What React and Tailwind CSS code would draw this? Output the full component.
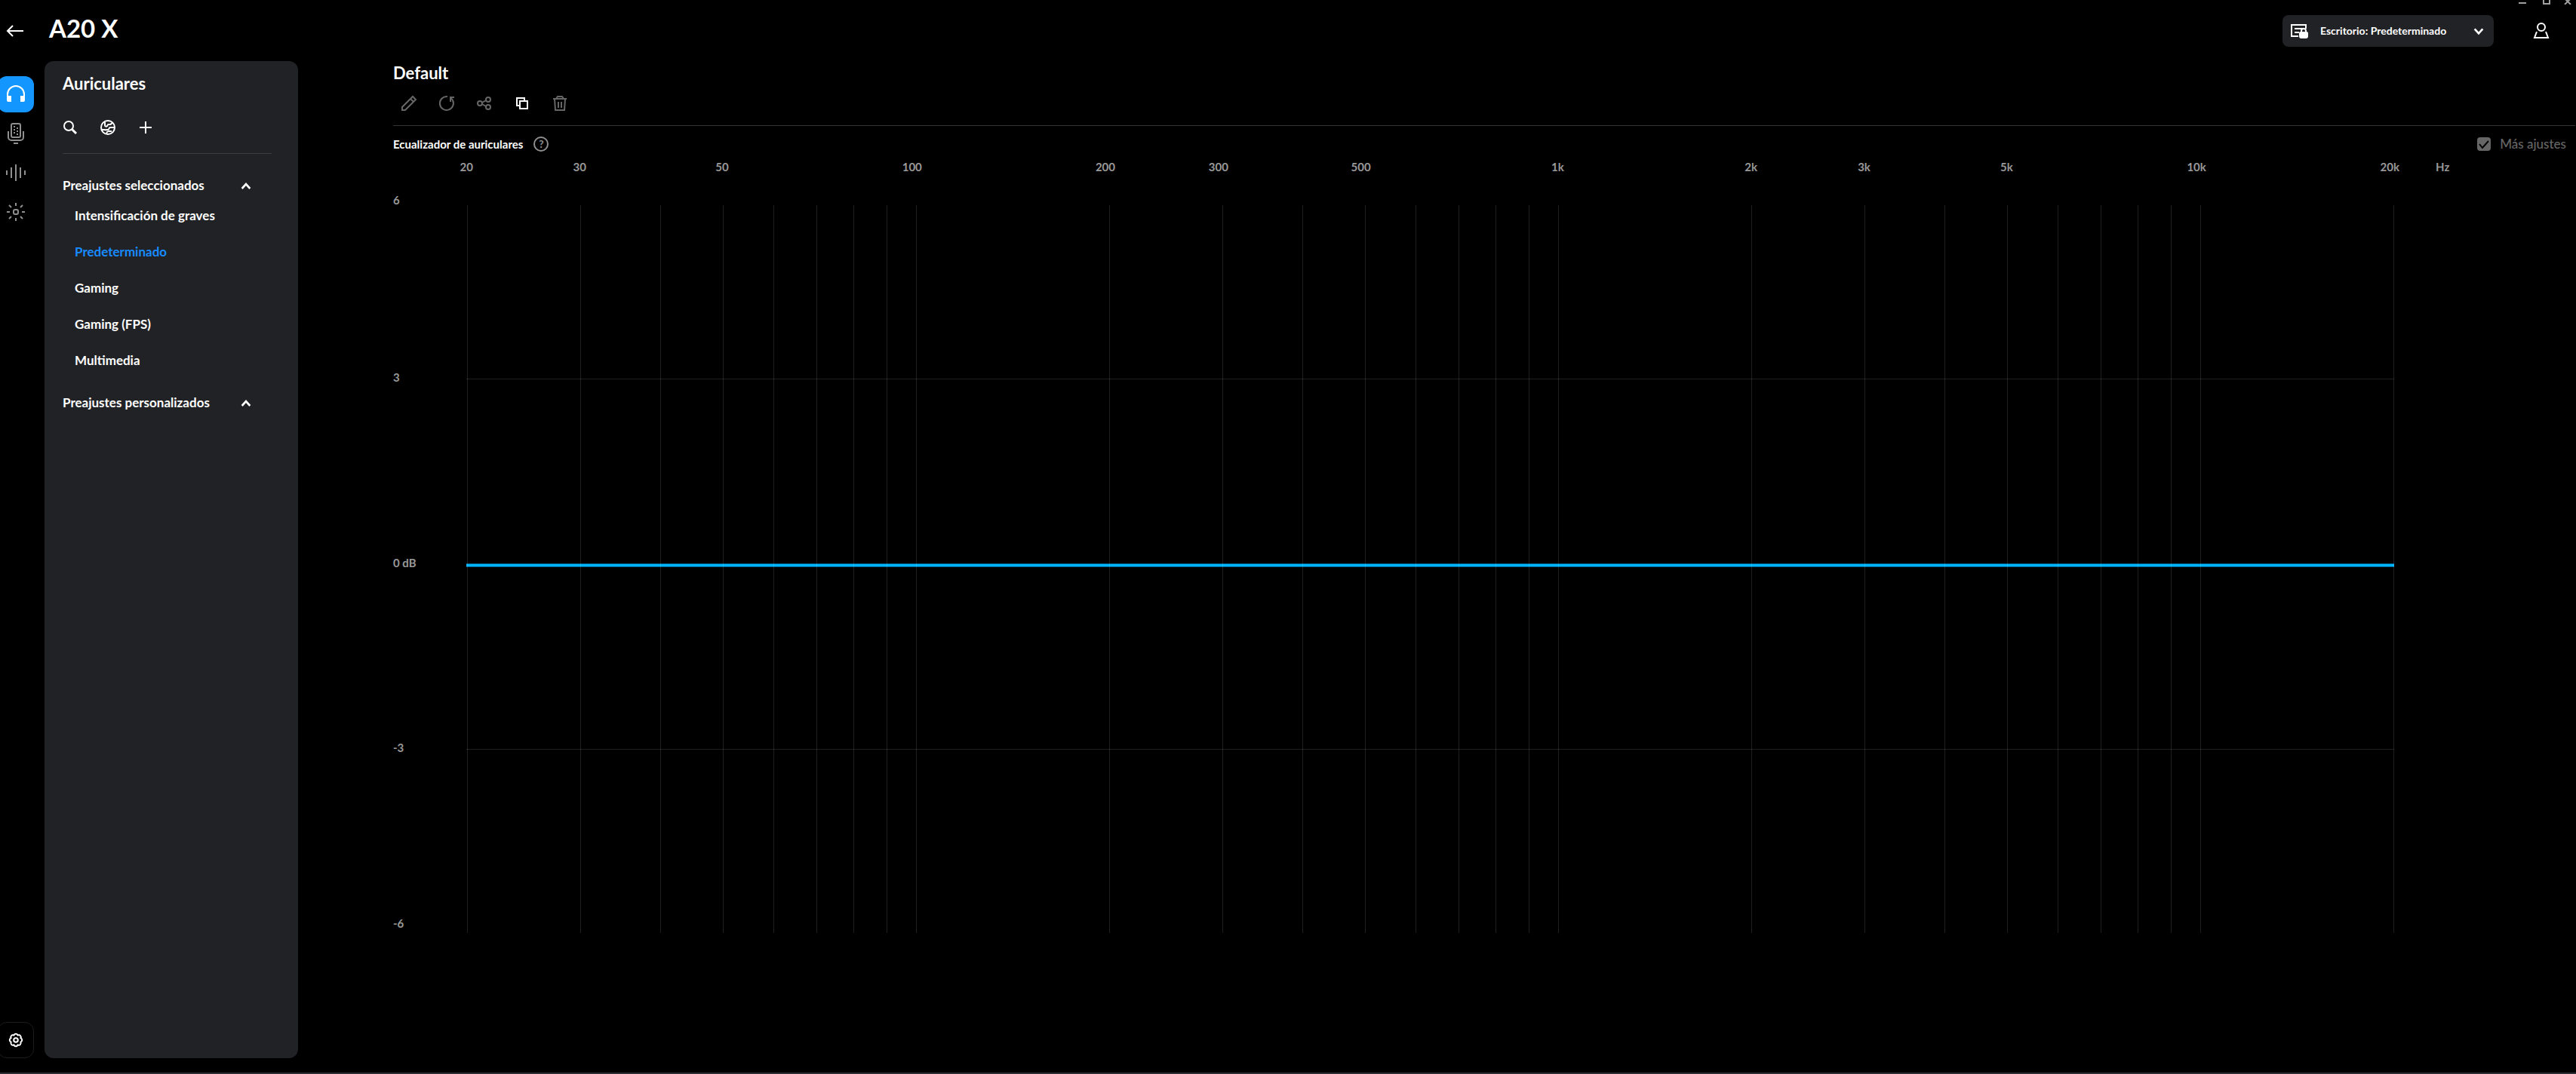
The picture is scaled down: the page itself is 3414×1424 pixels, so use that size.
import { useState } from 'react';

const rail = [
    { id: 'headphones', label: 'Auriculares' },
    { id: 'mic', label: 'Micrófono' },
    { id: 'mixer', label: 'Mezclador' },
    { id: 'light', label: 'Iluminación' },
];

const panelTools = [
    { id: 'search', label: 'Buscar' },
    { id: 'globe', label: 'Explorar' },
    { id: 'plus', label: 'Nuevo preajuste' },
];

const presets = ['Intensificación de graves', 'Predeterminado', 'Gaming', 'Gaming (FPS)', 'Multimedia'];

const actions = [
    { id: 'edit', label: 'Editar' },
    { id: 'reset', label: 'Restablecer' },
    { id: 'share', label: 'Compartir' },
    { id: 'copy', label: 'Duplicar', enabled: true },
    { id: 'trash', label: 'Eliminar' },
];

const freqLabels = [
    [20, '20'], [30, '30'], [50, '50'], [100, '100'], [200, '200'], [300, '300'], [500, '500'],
    [1000, '1k'], [2000, '2k'], [3000, '3k'], [5000, '5k'], [10000, '10k'], [20000, '20k'],
];

const gridFreqs = [
    20, 30, 40, 50, 60, 70, 80, 90, 100, 200, 300, 400, 500, 600, 700, 800, 900, 1000,
    2000, 3000, 4000, 5000, 6000, 7000, 8000, 9000, 10000, 20000,
];

const gainLabels = ['6', '3', '0 dB', '-3', '-6'];

// log scale, 20 Hz - 20 kHz
const freqPos = (f) => (Math.log10(f / 20) / 3) * 100;

function Icon({ name, size = 24 }) {
    const props = { width: size, height: size, viewBox: '0 0 24 24', fill: 'none', stroke: 'currentColor', strokeWidth: 2, 'aria-hidden': true };
    switch (name) {
        case 'back':
            return <svg {...props}><path d="M23 12H3M9 5l-7 7 7 7" /></svg>;
        case 'headphones':
            return (
                <svg {...props}>
                    <path d="M1 16v-4a11 11 0 0 1 22 0v4" />
                    <path d="M0 14h6v8H2a2 2 0 0 1-2-2zM18 14h6v6a2 2 0 0 1-2 2h-4z" fill="currentColor" stroke="none" />
                </svg>
            );
        case 'mic':
            return (
                <svg {...props} height="28" viewBox="0 0 24 28">
                    <rect x="6" y="1" width="12" height="18" rx="2" />
                    <path d="M2 11v8a4 4 0 0 0 4 4h12a4 4 0 0 0 4-4v-8M9 27h6" />
                    <path d="M9 5h2M13 7h2M9 9h2M13 11h2M9 13h2M13 15h2" />
                </svg>
            );
        case 'mixer':
            return <svg {...props} width="26" viewBox="0 0 26 24"><path d="M1 9v6M7 5v14M13 1v22M19 5v14M25 9v6" /></svg>;
        case 'light':
            return (
                <svg {...props}>
                    <rect x="9" y="9" width="6" height="6" rx="2" />
                    <path d="M12 0v4M12 20v4M0 12h4M20 12h4M3 3l3 3M18 18l3 3M3 21l3-3M18 6l3-3" />
                </svg>
            );
        case 'search':
            return <svg {...props}><circle cx="10" cy="10" r="6" /><path d="M14 14l6 6" strokeWidth="3" /></svg>;
        case 'globe':
            return (
                <svg {...props}>
                    <circle cx="12" cy="12" r="9" />
                    <path d="M8 5v4c0 2 2 2 3 1s0-2 2-2h2c2 0 1-2 3-2M4 15h3c2 0 2 1 3 0h2c2 0 1-3 3-3h5M10 20c1-1 0-3 3-3h4" />
                </svg>
            );
        case 'plus':
            return <svg {...props}><path d="M12 4v16M4 12h16" /></svg>;
        case 'up':
            return <svg {...props}><path d="M4 18l8-9 8 9" strokeWidth="4" /></svg>;
        case 'down':
            return <svg {...props}><path d="M4 8l8 9 8-9" strokeWidth="4" /></svg>;
        case 'edit':
            return <svg {...props}><path d="M3 17L17 3l4 4L7 21H3zM14 6l4 4" /></svg>;
        case 'reset':
            return <svg {...props}><path d="M13 3a9 9 0 1 0 7 5M17 10V4h5M17 4l3 4" /></svg>;
        case 'share':
            return (
                <svg {...props}>
                    <circle cx="6" cy="12" r="3" />
                    <circle cx="17" cy="7" r="3" />
                    <circle cx="17" cy="17" r="3" />
                    <path d="M9 11l5-3M9 13l5 3" />
                </svg>
            );
        case 'copy':
            return <svg {...props}><path d="M9 9h10v10H9zM9 15H5V5h10v4" /></svg>;
        case 'trash':
            return <svg {...props}><path d="M3 6h18M7 6l2-3h6l2 3M5 6l1 15h12l1-15M10 10v8M14 10v8" /></svg>;
        case 'profile':
            return (
                <svg {...props}>
                    <path d="M21 9V4H2v15h9M6 9h11M6 14h6" />
                    <path d="M15 14v-2a3 3 0 0 1 6 0v2" />
                    <path d="M12 15a2 2 0 0 1 2-2h8a2 2 0 0 1 2 2v4a3 3 0 0 1-3 3h-6a3 3 0 0 1-3-3z" fill="currentColor" stroke="none" />
                </svg>
            );
        case 'user':
            return <svg {...props}><circle cx="12" cy="7" r="5" /><path d="M6 13l-3 8h18l-3-8" /></svg>;
        case 'gear':
            return (
                <svg {...props}>
                    <circle cx="12" cy="12" r="2.800" />
                    <path
                        d="M18.300 9.400A2.700 2.700 0 0 1 18.300 14.600A2.700 2.700 0 0 1 14.600 18.300A2.700 2.700 0 0 1 9.400 18.300A2.700 2.700 0 0 1 5.700 14.600A2.700 2.700 0 0 1 5.700 9.400A2.700 2.700 0 0 1 9.400 5.700A2.700 2.700 0 0 1 14.600 5.700A2.700 2.700 0 0 1 18.300 9.400z"
                        strokeLinejoin="round"
                    />
                </svg>
            );
        default:
            return null;
    }
}

function WindowControls() {
    return (
        <div className="absolute top-0 right-0 flex text-[#a0a0a0]">
            <button aria-label="Minimizar" className="w-8 h-2 flex justify-center">
                <svg width="10" height="6" fill="none" stroke="currentColor" strokeWidth="2"><path d="M0 4h10" /></svg>
            </button>
            <button aria-label="Maximizar" className="w-8 h-2 flex justify-center">
                <svg width="10" height="6" fill="none" stroke="currentColor" strokeWidth="2"><path d="M1 0v5h8V0" /></svg>
            </button>
            <button aria-label="Cerrar" className="w-[23px] h-2 flex justify-center">
                <svg width="10" height="6" fill="none" stroke="currentColor" strokeWidth="2"><path d="M1 6l8-8M9 6L1-2" /></svg>
            </button>
        </div>
    );
}

function PresetGroup({ title, items, selected, onSelect }) {
    const [open, setOpen] = useState(true);

    return (
        <section>
            <button
                onClick={() => setOpen(!open)}
                aria-expanded={open}
                className="w-full h-8 pr-[26px] flex items-center justify-between text-[17px] leading-6 font-bold"
            >
                {title}
                <Icon name={open ? 'up' : 'down'} size={16} />
            </button>
            {open && (
                <ul>
                    {items.map(item => (
                        <li key={item}>
                            <button
                                onClick={() => onSelect(item)}
                                className={`w-full h-12 pl-4 text-left text-[17px] leading-6 font-bold ${selected === item ? 'text-[#178bff]' : 'text-white'}`}
                            >
                                {item}
                            </button>
                        </li>
                    ))}
                </ul>
            )}
        </section>
    );
}

function Equalizer() {
    return (
        <div className="flex-1 flex flex-col text-[#999999] text-[15px] leading-5 font-bold">
            {/* Frequency axis, labels end just after their grid line */}
            <div className="flex h-5">
                <div className="relative flex-1 ml-[106px]">
                    {freqLabels.map(([f, label]) => (
                        <span key={f} className="absolute top-0" style={{ right: `${100 - freqPos(f)}%` }}>{label}</span>
                    ))}
                </div>
                <span className="w-[233px] pl-12">Hz</span>
            </div>

            <div className="flex-1 flex mt-6 pr-[240px]">
                <div className="w-[97px] pb-[3px] grid grid-rows-[235fr_246fr_245fr_233fr_20px]">
                    {gainLabels.map(g => <span key={g}>{g}</span>)}
                </div>
                <div className="flex-1 flex pt-[17px]">
                    <div className="relative flex-1">
                        <div className="absolute inset-x-0 top-[49.2%] h-[5px] bg-[#00b4ff] border-y border-[#00608a]" />
                        <div className="absolute inset-x-0 top-[23.8%] h-px bg-white/12" />
                        <div className="absolute inset-x-0 top-[74.7%] h-px bg-white/12" />
                        <div className="absolute inset-y-0 left-px right-px">
                            {gridFreqs.map(f => (
                                <div key={f} className="absolute inset-y-0 w-px bg-white/12" style={{ left: `${freqPos(f)}%` }} />
                            ))}
                        </div>
                    </div>
                </div>
            </div>
        </div>
    );
}

export default function App() {
    const [selected, setSelected] = useState('Predeterminado');
    const [tab, setTab] = useState('headphones');

    return (
        <div className="relative min-h-screen flex flex-col bg-black text-white font-['Lato',sans-serif] border-b-2 border-[#2b2e33]">
            <WindowControls />

            {/* Top bar */}
            <header className="h-[81px] flex items-start">
                <button aria-label="Volver" className="w-[65px] pt-[29px] pl-2">
                    <Icon name="back" />
                </button>
                <h1 className="pt-[17px] text-[33px] leading-10 font-bold">A20 X</h1>
                <label className="ml-auto mt-5 mr-[51px] w-[280px] h-[42px] flex items-center pl-[10px] pr-3 rounded-lg bg-[#212226]">
                    <Icon name="profile" />
                    <select
                        aria-label="Perfil"
                        className="flex-1 ml-4 appearance-none bg-transparent text-[14px] leading-5 font-bold outline-none"
                    >
                        <option>Escritorio: Predeterminado</option>
                    </select>
                    <Icon name="down" size={16} />
                </label>
                <button aria-label="Cuenta" className="mt-[29px] mr-[34px]">
                    <Icon name="user" />
                </button>
            </header>

            <div className="flex-1 flex pb-[19px]">
                {/* Icon rail */}
                <nav className="w-[59px] pt-5 flex flex-col gap-1">
                    {rail.map(item => (
                        <button
                            key={item.id}
                            aria-label={item.label}
                            onClick={() => setTab(item.id)}
                            className={`w-12 h-12 -ml-[3px] rounded-xl flex items-center justify-center ${tab === item.id ? 'bg-[#1496ff] text-white' : 'text-[#8f8f8f]'}`}
                        >
                            <Icon name={item.id} />
                        </button>
                    ))}
                    <button aria-label="Configuración" className="w-12 h-12 -ml-[3px] mt-auto rounded-xl border border-[#1c1c1e] flex items-center justify-center">
                        <Icon name="gear" />
                    </button>
                </nav>

                {/* Presets panel */}
                <aside className="w-[336px] shrink-0 rounded-xl bg-[#212226] pt-4 pl-6 pr-[35px]">
                    <h2 className="text-[22px] leading-7 font-bold">Auriculares</h2>
                    <div className="mt-8 pb-[22px] border-b border-[#3b3c40]">
                        <div className="-mx-[2px] flex gap-[26px]">
                            {panelTools.map(t => (
                                <button key={t.id} aria-label={t.label} className="w-6 h-6">
                                    <Icon name={t.id} />
                                </button>
                            ))}
                        </div>
                    </div>
                    <div className="mt-[26px] flex flex-col gap-4">
                        <PresetGroup title="Preajustes seleccionados" items={presets} selected={selected} onSelect={setSelected} />
                        <PresetGroup title="Preajustes personalizados" items={[]} selected={selected} onSelect={setSelected} />
                    </div>
                </aside>

                {/* Preset detail */}
                <main className="flex-1 flex flex-col pl-[126px] pr-px pb-[166px]">
                    <h2 className="text-[22px] leading-8 font-bold">Default</h2>
                    <div className="mt-3 pb-[17px] pl-[9px] flex gap-[26px] border-b border-[#333333]">
                        {actions.map(a => (
                            <button key={a.id} aria-label={a.label} disabled={!a.enabled} className="w-6 h-6 disabled:text-[#666666]">
                                <Icon name={a.id} />
                            </button>
                        ))}
                    </div>
                    <div className="h-11 pt-1 pr-3 flex items-center">
                        <h3 className="text-[15px] leading-5 font-bold">Ecualizador de auriculares</h3>
                        <button aria-label="Ayuda" className="ml-[14px] w-5 h-5 rounded-full border-2 border-[#8f8f8f] text-[#8f8f8f] text-[14px] leading-4 font-bold">
                            ?
                        </button>
                        <label className="ml-auto flex items-center gap-3 text-[17px] leading-5 font-medium text-[#666666]">
                            <span className="relative w-[18px] h-[18px]">
                                <input type="checkbox" defaultChecked disabled className="block w-[18px] h-[18px] appearance-none rounded bg-[#666666]" />
                                <svg width="18" height="18" viewBox="0 0 18 18" fill="none" stroke="#000000" strokeWidth="2" className="absolute inset-0" aria-hidden="true">
                                    <path d="M3 9l4 5 8-9" />
                                </svg>
                            </span>
                            Más ajustes
                        </label>
                    </div>
                    <Equalizer />
                </main>
            </div>
        </div>
    );
}
